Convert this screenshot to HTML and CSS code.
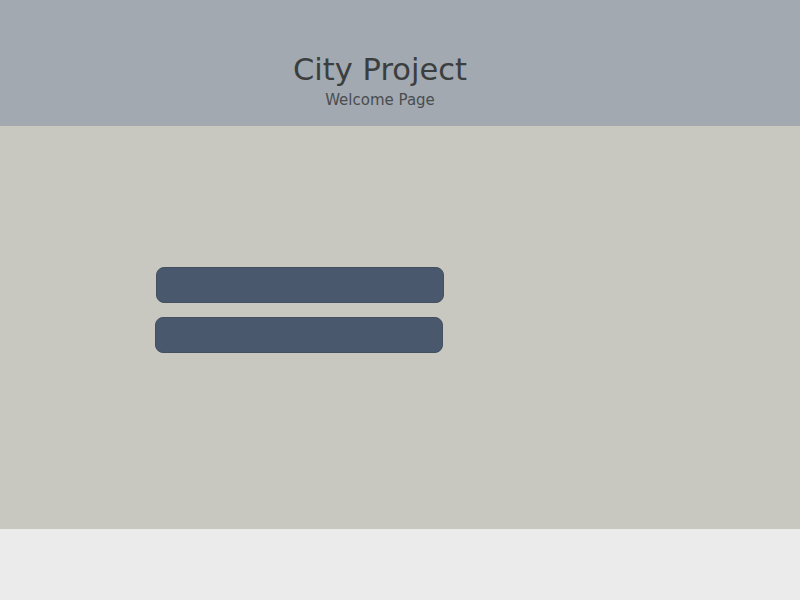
FILE: index.html
```html
<!DOCTYPE html>
<html>
<head>
<meta charset="utf-8">
<link rel="stylesheet" href="styles.css">
</head>
<body>
<header class="header">
  <h1 class="title">City Project</h1>
  <p class="subtitle">Welcome Page</p>
</header>
<main class="main">
  <div class="bars">
    <div class="bar bar-one"></div>
    <div class="bar bar-two"></div>
  </div>
</main>
</body>
</html>
```
FILE: styles.css
```css
html, body {
  margin: 0;
  padding: 0;
  background: #ebebeb;
  font-family: "DejaVu Sans", sans-serif;
}
.header {
  height: 126px;
  background: #a2a9b0;
  box-sizing: border-box;
  padding: 52px 40px 0 0;
  text-align: center;
}
.title {
  margin: 0;
  font-size: 30.5px;
  font-weight: normal;
  line-height: 36px;
  color: #3b3e3e;
}
.subtitle {
  margin: 3px 0 0;
  font-size: 15px;
  line-height: 18px;
  color: #4a4d50;
}
.main {
  height: 403px;
  background: #c9c8c0;
  box-sizing: border-box;
  padding: 141px 0 0 155px;
}
.bars {
  display: flex;
  flex-direction: column;
  gap: 14px;
}
.bar {
  width: 288px;
  height: 36px;
  box-sizing: border-box;
  background: #4a586e;
  border-radius: 8px;
  border: 1px solid #444f60;
}
.bar-one {
  margin-left: 1px;
}
```
